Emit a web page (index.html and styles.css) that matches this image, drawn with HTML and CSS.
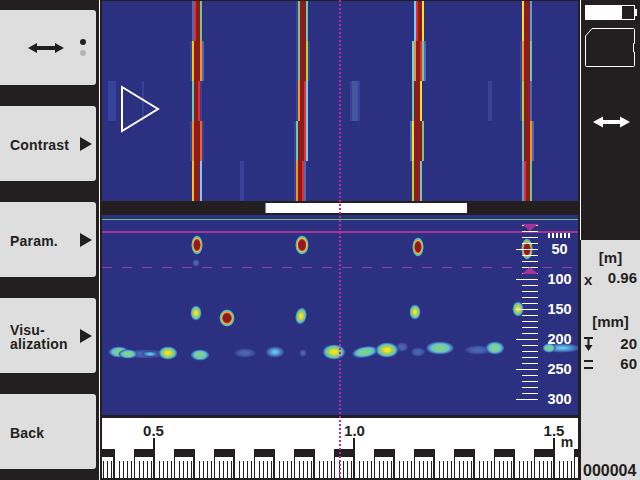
FILE: index.html
```html
<!DOCTYPE html>
<html lang="en">
<head>
  <meta charset="UTF-8" />
  <title>Radar scan</title>
  <link rel="stylesheet" href="styles.css">
</head>
<body>
  <div class="screen">

    <!-- softkeys -->
    <nav class="sidebar">
      <div class="softkey softkey-mode">
        <svg class="mode-arrow" viewBox="0 0 36 12"><path d="M0 6 9 1V4H27V1L36 6 27 11V8H9V11Z"/></svg>
        <div class="mode-dots"><span class="dot"></span><span class="dot dot-off"></span></div>
      </div>
      <div class="softkey"><span class="softkey-text">Contrast</span><span class="softkey-arrow"></span></div>
      <div class="softkey"><span class="softkey-text">Param.</span><span class="softkey-arrow"></span></div>
      <div class="softkey"><span class="softkey-text">Visu-<br>alization</span><span class="softkey-arrow"></span></div>
      <div class="softkey"><span class="softkey-text">Back</span></div>
    </nav>

    <main class="main">
      <!-- top view -->
      <svg class="scan scan-top" viewBox="102 1 476 200">
        <rect x="108" y="81" width="8" height="40" class="faint"/>
        <rect x="142" y="81" width="2" height="40" class="faint"/>
        <rect x="240" y="161" width="4" height="40" class="faint"/>
        <rect x="350" y="81" width="10" height="40" class="faint"/>
        <rect x="352" y="81" width="6" height="40" class="faint2"/>
        <rect x="488" y="81" width="4" height="40" class="faint"/>

        <g class="row" transform="translate(0 1)">
          <rect x="192" width="2" class="blue"/><rect x="194" width="2" class="red"/><rect x="196" width="4" class="dark"/><rect x="200" width="2" class="green"/>
          <rect x="296" width="2" class="faint"/><rect x="298" width="2" class="green"/><rect x="300" width="6" class="dark"/><rect x="306" width="2" class="teal"/>
          <rect x="414" width="2" class="cyan"/><rect x="416" width="2" class="red"/><rect x="418" width="4" class="dark"/><rect x="422" width="2" class="yellow"/>
          <rect x="522" width="2" class="yellow"/><rect x="524" width="6" class="dark"/><rect x="530" width="2" class="sky"/>
        </g>
        <g class="row" transform="translate(0 41)">
          <rect x="190" width="2" class="faint"/><rect x="192" width="2" class="gold"/><rect x="194" width="6" class="dark"/><rect x="200" width="2" class="orange"/><rect x="202" width="2" class="blue"/>
          <rect x="296" width="2" class="faint"/><rect x="298" width="2" class="green"/><rect x="300" width="6" class="dark"/><rect x="306" width="2" class="lime"/><rect x="308" width="2" class="faint"/>
          <rect x="412" width="2" class="cyan"/><rect x="414" width="2" class="orange"/><rect x="416" width="4" class="dark"/><rect x="420" width="2" class="red"/><rect x="422" width="2" class="teal"/><rect x="424" width="2" class="blue"/>
          <rect x="520" width="2" class="faint"/><rect x="522" width="2" class="orange"/><rect x="524" width="6" class="dark"/><rect x="530" width="2" class="teal"/>
        </g>
        <g class="row" transform="translate(0 81)">
          <rect x="192" width="2" class="teal"/><rect x="194" width="4" class="dark"/><rect x="198" width="2" class="red"/><rect x="200" width="2" class="faint"/>
          <rect x="296" width="2" class="faint"/><rect x="298" width="2" class="orange"/><rect x="300" width="4" class="dark"/><rect x="304" width="2" class="red"/><rect x="306" width="2" class="cyan"/>
          <rect x="412" width="2" class="teal"/><rect x="414" width="6" class="dark"/><rect x="420" width="2" class="yellow"/>
          <rect x="520" width="2" class="faint"/><rect x="522" width="2" class="lime"/><rect x="524" width="4" class="dark"/><rect x="528" width="2" class="dark2"/><rect x="530" width="2" class="blue"/>
        </g>
        <g class="row" transform="translate(0 121)">
          <rect x="190" width="2" class="faint"/><rect x="192" width="2" class="orange"/><rect x="194" width="6" class="dark"/><rect x="200" width="2" class="tangerine"/><rect x="202" width="2" class="faint"/>
          <rect x="294" width="2" class="faint"/><rect x="296" width="2" class="teal"/><rect x="298" width="6" class="dark"/><rect x="304" width="2" class="red"/><rect x="306" width="2" class="cyan"/>
          <rect x="410" width="2" class="blue"/><rect x="412" width="2" class="yellow"/><rect x="414" width="8" class="dark"/><rect x="422" width="2" class="green"/>
          <rect x="522" width="2" class="teal"/><rect x="524" width="6" class="dark"/><rect x="530" width="2" class="orange"/><rect x="532" width="2" class="blue"/>
        </g>
        <g class="row" transform="translate(0 161)">
          <rect x="192" width="2" class="gold"/><rect x="194" width="6" class="dark"/><rect x="200" width="2" class="cyan"/>
          <rect x="294" width="2" class="faint"/><rect x="296" width="2" class="orange"/><rect x="298" width="4" class="dark"/><rect x="302" width="2" class="red"/><rect x="304" width="2" class="blue"/>
          <rect x="412" width="2" class="lime"/><rect x="414" width="4" class="dark"/><rect x="418" width="2" class="dark2"/><rect x="420" width="2" class="teal"/>
          <rect x="522" width="2" class="sky"/><rect x="524" width="2" class="red"/><rect x="526" width="4" class="dark"/><rect x="530" width="2" class="green"/>
        </g>

        <path class="play" d="M122 87 158 109 122 131Z"/>
      </svg>

      <div class="scrollbar"><div class="scroll-thumb"></div></div>

      <!-- depth view -->
      <svg class="scan scan-bottom" viewBox="102 215 476 200">
        <defs>
          <radialGradient id="hot">
            <stop offset="0.45" stop-color="#8a1c20"/><stop offset="0.55" stop-color="#e8262a"/><stop offset="0.65" stop-color="#f5c518"/>
            <stop offset="0.75" stop-color="#7cc576"/><stop offset="0.86" stop-color="#4db4e0"/><stop offset="0.95" stop-color="#3a4a9c"/><stop offset="1" stop-color="#2b3080" stop-opacity="0"/>
          </radialGradient>
          <radialGradient id="warm">
            <stop offset="0.2" stop-color="#f5e12a"/><stop offset="0.45" stop-color="#a8d14a"/>
            <stop offset="0.7" stop-color="#5cc4c8"/><stop offset="0.88" stop-color="#3f62ac"/><stop offset="1" stop-color="#2b3080" stop-opacity="0"/>
          </radialGradient>
          <radialGradient id="mild">
            <stop offset="0.35" stop-color="#7fd08a"/><stop offset="0.6" stop-color="#5cc4d8"/>
            <stop offset="0.85" stop-color="#3f62ac"/><stop offset="1" stop-color="#2b3080" stop-opacity="0"/>
          </radialGradient>
          <radialGradient id="cool">
            <stop offset="0.15" stop-color="#5cc8ec"/><stop offset="0.55" stop-color="#4a86c4"/>
            <stop offset="0.85" stop-color="#3a4a9c"/><stop offset="1" stop-color="#2b3080" stop-opacity="0"/>
          </radialGradient>
          <radialGradient id="dim">
            <stop offset="0.3" stop-color="#4a66b0"/><stop offset="0.75" stop-color="#3a4a9c"/><stop offset="1" stop-color="#2b3080" stop-opacity="0"/>
          </radialGradient>
        </defs>

        <rect x="102" y="219" width="476" height="1" class="guide-green"/>

        <!-- targets -->
        <ellipse cx="197" cy="245" rx="6" ry="10" fill="url(#hot)"/>
        <ellipse cx="302" cy="245" rx="7" ry="10" fill="url(#hot)"/>
        <ellipse cx="418" cy="247" rx="6" ry="10" fill="url(#hot)"/>
        <ellipse cx="527" cy="249" rx="6" ry="11" fill="url(#hot)"/>
        <ellipse cx="196" cy="263" rx="4" ry="4" fill="url(#dim)"/>

        <ellipse cx="196" cy="313" rx="6" ry="8" fill="url(#warm)"/>
        <ellipse cx="227" cy="318" rx="8" ry="9" fill="url(#hot)"/>
        <ellipse cx="301" cy="316" rx="6" ry="9" fill="url(#warm)" transform="rotate(12 301 316)"/>
        <ellipse cx="415" cy="312" rx="6" ry="8" fill="url(#warm)"/>
        <ellipse cx="518" cy="309" rx="6" ry="8" fill="url(#warm)"/>

        <!-- rebar band -->
        <ellipse cx="145" cy="354" rx="24" ry="5" fill="url(#dim)"/>
        <ellipse cx="150" cy="354" rx="9" ry="3" fill="url(#cool)"/>
        <ellipse cx="119" cy="352" rx="11" ry="6" fill="url(#mild)"/>
        <ellipse cx="128" cy="354" rx="10" ry="5" fill="url(#mild)"/>
        <ellipse cx="168" cy="353" rx="10" ry="7" fill="url(#warm)"/>
        <ellipse cx="200" cy="355" rx="10" ry="6" fill="url(#mild)"/>
        <ellipse cx="245" cy="353" rx="12" ry="5" fill="url(#dim)"/>
        <ellipse cx="275" cy="352" rx="10" ry="6" fill="url(#cool)"/>
        <ellipse cx="303" cy="353" rx="4" ry="4" fill="url(#dim)"/>
        <ellipse cx="334" cy="352" rx="12" ry="8" fill="url(#warm)"/>
        <ellipse cx="402" cy="347" rx="7" ry="5" fill="url(#dim)"/>
        <ellipse cx="365" cy="352" rx="14" ry="6" fill="url(#mild)" transform="rotate(-10 365 352)"/>
        <ellipse cx="387" cy="350" rx="12" ry="8" fill="url(#warm)"/>
        <ellipse cx="418" cy="352" rx="8" ry="5" fill="url(#dim)"/>
        <ellipse cx="440" cy="348" rx="15" ry="7" fill="url(#mild)"/>
        <ellipse cx="478" cy="350" rx="15" ry="5" fill="url(#dim)"/>
        <ellipse cx="495" cy="348" rx="10" ry="7" fill="url(#mild)"/>
        <ellipse cx="562" cy="348" rx="20" ry="5" fill="url(#cool)"/>
        <ellipse cx="549" cy="348" rx="7" ry="5" fill="url(#mild)"/>

        <rect x="102" y="231" width="476" height="2" class="guide-magenta"/>
        <line x1="102" y1="267.500" x2="578" y2="267.500" class="guide-dash"/>

        <!-- depth scale -->
        <path class="ticks" d="M522 225.500H538M522 231.500H538M522 237.500H538M522 243.500H538M516 249.500H538M522 255.500H538M522 261.500H538M522 267.500H538M522 273.500H538M516 279.500H538M522 285.500H538M522 291.500H538M522 297.500H538M522 303.500H538M516 309.500H538M522 315.500H538M522 321.500H538M522 327.500H538M522 333.500H538M516 339.500H538M522 345.500H538M522 351.500H538M522 357.500H538M522 363.500H538M516 369.500H538M522 375.500H538M522 381.500H538M522 387.500H538M522 393.500H538M516 399.500H538"/>
        <path class="marker" d="M522 224H538L530 231ZM522 274H538L530 267Z"/>
        <path class="ticks ticks-thick" d="M549 233V238M553 233V238M557 233V238M561 233V238M565 233V238M569 233V238"/>
        <g class="depth-labels">
          <text x="559.500" y="254">50</text>
          <text x="559.500" y="284">100</text>
          <text x="559.500" y="314">150</text>
          <text x="559.500" y="344">200</text>
          <text x="559.500" y="374">250</text>
          <text x="559.500" y="404">300</text>
        </g>
      </svg>

      <!-- distance ruler -->
      <div class="ruler">
        <svg class="ruler-svg" viewBox="102 418 476 62">
          <defs>
            <pattern id="scale" x="113" y="449" width="40" height="31" patternUnits="userSpaceOnUse">
              <rect width="40" height="31" class="ruler-dark"/>
              <rect x="2" width="19" height="29" class="ruler-light"/>
              <rect x="22" y="8" width="18" height="21" class="ruler-light"/>
              <path class="ruler-fine" d="M6.500 12V29M10.500 12V29M14.500 12V29M18.500 12V29M26.500 12V29M30.500 12V29M34.500 12V29M38.500 12V29"/>
            </pattern>
          </defs>
          <rect x="102" y="418" width="476" height="31" class="ruler-light"/>
          <rect x="102" y="449" width="476" height="31" fill="url(#scale)"/>
          <rect x="153" y="438" width="2" height="11" class="ruler-dark"/>
          <rect x="353" y="438" width="2" height="11" class="ruler-dark"/>
          <rect x="553" y="438" width="2" height="11" class="ruler-dark"/>
          <g class="ruler-labels">
            <text x="153.500" y="436">0.5</text>
            <text x="354.500" y="436">1.0</text>
            <text x="554" y="436">1.5</text>
            <text x="567" y="447" class="ruler-unit">m</text>
          </g>
        </svg>
      </div>

      <div class="cursor"></div>
    </main>

    <aside class="status">
      <div class="status-top">
        <svg class="status-icons" viewBox="0 0 59 140">
          <rect x="5.500" y="5.500" width="49" height="14" class="outline"/>
          <rect x="5" y="5" width="37" height="15" class="fill-white"/>
          <rect x="55" y="9" width="2" height="7" class="fill-white"/>
          <path class="outline" d="M5.500 36 12 28.500H53.500Q54.500 28.500 54.500 29.500V43.500H53.500V52H54.500V65.500Q54.500 66.500 53.500 66.500H6.500Q5.500 66.500 5.500 65.500Z"/>
          <path class="fill-white" d="M13 122 23 116.500V120H40V116.500L50 122 40 127.500V124H23V127.500Z"/>
        </svg>
      </div>
      <div class="status-info">
        <div class="unit">[m]</div>
        <div class="value-row value-row-x"><span class="axis">x</span><span>0.96</span></div>
        <div class="unit unit-mm">[mm]</div>
        <div class="value-row value-row-depth">
          <svg class="value-icon" viewBox="0 0 9 14"><path d="M0 0H9V2H5.500V8H8.500L4.500 14 0.500 8H3.500V2H0Z"/></svg>
          <span>20</span>
        </div>
        <div class="value-row value-row-space">
          <svg class="value-icon" viewBox="0 0 9 9"><path d="M0 0H9V2H0ZM0 7H9V9H0Z"/></svg>
          <span>60</span>
        </div>
        <div class="counter">000004</div>
      </div>
    </aside>

  </div>
</body>
</html>
```

FILE: styles.css
```css
* {
  box-sizing: border-box;
}

body {
  margin: 0;
  background: #231f20;
  font-family: "Liberation Sans", Arial, sans-serif;
  font-weight: bold;
  overflow: hidden;
}

.screen {
  display: grid;
  grid-template-columns: 100px 478px 62px;
  width: 640px;
  height: 480px;
  background: #231f20;
}

/* softkeys */

.sidebar {
  display: flex;
  flex-direction: column;
  gap: 21px;
  padding: 10px 3px 0 0;
  border-right: 1px solid #fff;
}

.softkey {
  display: flex;
  align-items: center;
  justify-content: space-between;
  height: 75px;
  padding: 0 4px 0 10px;
  background: #dedede;
  border-radius: 0 3px 3px 0;
  color: #231f20;
}

.softkey-text {
  padding-top: 2px;
  font-size: 14px;
  line-height: 14px;
  letter-spacing: 0.2px;
}

.softkey-arrow {
  width: 0;
  height: 0;
  border-left: 12px solid #231f20;
  border-top: 7.5px solid transparent;
  border-bottom: 7.5px solid transparent;
}

.softkey-mode {
  padding: 0 10px 0 28px;
}

.mode-arrow {
  width: 36px;
  height: 12px;
  margin-top: 1px;
  fill: #231f20;
}

.mode-dots {
  display: flex;
  flex-direction: column;
  gap: 5px;
}

.dot {
  width: 6px;
  height: 6px;
  border-radius: 50%;
  background: #231f20;
}

.dot-off {
  background: #b4b4b4;
}

/* scans */

.main {
  position: relative;
  width: 476px;
  margin-left: 2px;
  padding-top: 1px;
}

.scan {
  display: block;
  width: 476px;
  height: 200px;
  background: #2b3080;
}

.row rect { height: 40px; }

.dark { fill: #8a1c20; }
.dark2 { fill: #a01b20; }
.red { fill: #ed2a2c; }
.tangerine { fill: #f26522; }
.orange { fill: #f7941d; }
.gold { fill: #f5c518; }
.yellow { fill: #f5e12a; }
.lime { fill: #b5d334; }
.green { fill: #7cc576; }
.teal { fill: #6fc8a8; }
.cyan { fill: #6dcff6; }
.sky { fill: #5b9bd5; }
.blue { fill: #4a6cb4; }
.faint { fill: #36429a; }
.faint2 { fill: #41569f; }

.play {
  fill: none;
  stroke: #fff;
  stroke-width: 2;
}

.scrollbar {
  height: 14px;
  padding: 2px 0 0 163px;
}

.scroll-thumb {
  width: 202px;
  height: 10px;
  background: #fff;
  border-left: 1px solid #888;
}

.guide-green { fill: #6cbf6c; }
.guide-magenta { fill: #a6359a; }

.guide-dash {
  stroke: #93439c;
  stroke-width: 1;
  stroke-dasharray: 10 10;
}

.ticks {
  fill: none;
  stroke: #fff;
  stroke-width: 1;
}

.ticks-thick {
  stroke-width: 2;
}

.marker {
  fill: #a6359a;
}

.depth-labels text {
  fill: #fff;
  font-size: 14.500px;
  text-anchor: middle;
}

/* ruler */

.ruler {
  padding-top: 3px;
}

.ruler-svg {
  display: block;
  width: 476px;
  height: 62px;
}

.ruler-light { fill: #fff; }
.ruler-dark { fill: #231f20; }

.ruler-fine {
  fill: none;
  stroke: #231f20;
  stroke-width: 1;
}

.ruler-labels text {
  fill: #231f20;
  font-size: 15px;
  text-anchor: middle;
}

.ruler-labels .ruler-unit {
  font-size: 14px;
}

.cursor {
  position: absolute;
  top: 0;
  left: 237px;
  width: 2px;
  height: 480px;
  background: repeating-linear-gradient(to bottom, #b5309c 0 2px, transparent 2px 4px);
}

/* right column */

.status {
  display: flex;
  flex-direction: column;
  padding-left: 3px;
}

.status-top {
  height: 240px;
  margin-left: -1px;
  border-left: 1px solid #fff;
}

.status-icons {
  display: block;
  width: 59px;
  height: 140px;
  margin-left: -1px;
}

.outline {
  fill: none;
  stroke: #fff;
  stroke-width: 1;
}

.fill-white {
  fill: #fff;
}

.status-info {
  flex: 1;
  display: flex;
  flex-direction: column;
  padding: 9px 3px 0 3px;
  background: #dedede;
  color: #231f20;
  font-size: 15px;
  line-height: 18px;
}

.unit {
  text-align: center;
}

.unit-mm {
  margin-top: 24px;
}

.value-row {
  display: flex;
  align-items: center;
  justify-content: space-between;
}

.value-row-x {
  margin-top: -1px;
}

.value-row-depth {
  margin-top: 4px;
}

.value-row-space {
  margin-top: 2px;
}

.axis {
  margin-top: 5px;
}

.value-icon {
  width: 9px;
  height: 14px;
  fill: #231f20;
}

.value-row-space .value-icon {
  height: 9px;
}

.counter {
  margin-top: auto;
  margin-bottom: 0;
  margin-left: -1px;
  font-size: 16px;
  line-height: 18px;
}
```
